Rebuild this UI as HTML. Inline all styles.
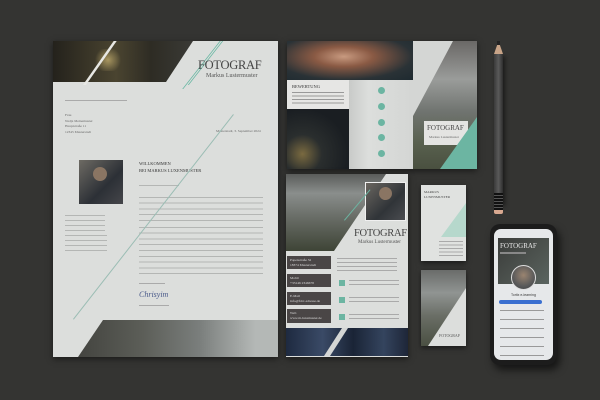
<!DOCTYPE html>
<html><head><meta charset="utf-8"><style>
*{margin:0;padding:0;box-sizing:border-box}
body{width:600px;height:400px;background:#343432;position:relative;overflow:hidden;font-family:"Liberation Serif",serif;color:#333}
.a{position:absolute}
</style></head><body>

<!-- LETTER -->
<div class="a" style="left:53px;top:41px;width:225px;height:316px;background:#dcdedc;box-shadow:0 2px 6px rgba(0,0,0,.5);overflow:hidden">
  <div class="a" style="left:0;top:0;width:140px;height:41px;background:linear-gradient(90deg,#24221c,#4a4430 45%,#2e2c24 70%,#3a3a36);clip-path:polygon(0 0,100% 0,113px 100%,0 100%)"></div>
  <div class="a" style="left:40px;top:8px;width:30px;height:22px;background:radial-gradient(circle,#a89660 0%,rgba(120,100,60,0) 70%)"></div>
  <div class="a" style="left:46px;top:-2px;width:3px;height:46px;background:#e8e8e4;transform:skewX(-35deg)"></div>
  <div class="a" style="left:148px;top:0;width:1px;height:48px;background:#6ab8a4;transform:skewX(-38deg)"></div>
  <div class="a" style="left:152px;top:0;width:1px;height:44px;background:#6ab8a4;transform:skewX(-38deg)"></div>
  <div class="a" style="left:145px;top:17px;font-size:12.5px;color:#444;letter-spacing:-.3px">FOTOGRAF</div>
  <div class="a" style="left:153px;top:32px;font-size:6px;color:#555">Markus Lustermuster</div>
  <div class="a" style="left:12px;top:59px;width:62px;height:1px;background:#aaa"></div>
  <div class="a" style="left:12px;top:72px;font-size:3.5px;line-height:5.5px;color:#666">Frau<br>Nadja Meinemuster<br>Hauptstraße 11<br>12345 Musterstadt</div>
  <div class="a" style="left:163px;top:88px;font-size:3.5px;color:#666">Musterstadt, 3. September 2024</div>
  <div class="a" style="left:26px;top:119px;width:44px;height:44px;background:linear-gradient(135deg,#6d6a63,#2c3036 60%,#45464a)"></div>
  <div class="a" style="left:40px;top:126px;width:14px;height:14px;border-radius:50%;background:#8a7563"></div>
  <div class="a" style="left:86px;top:119px;font-size:4.5px;line-height:7px;color:#333">WILLKOMMEN<br>BEI MARKUS LUXENMUSTER</div>
  <div class="a" style="left:12px;top:174px;width:40px;height:20px;background:repeating-linear-gradient(#b4b6b4 0 1px,transparent 1px 5px)"></div>
  <div class="a" style="left:12px;top:194px;width:42px;height:20px;background:repeating-linear-gradient(#b4b6b4 0 1px,transparent 1px 5px)"></div>
  <div class="a" style="left:86px;top:144px;width:40px;height:1px;background:#b4b6b4"></div>
  <div class="a" style="left:86px;top:156px;width:124px;height:24px;background:repeating-linear-gradient(#b4b6b4 0 1px,transparent 1px 5.7px)"></div>
  <div class="a" style="left:86px;top:186px;width:124px;height:24px;background:repeating-linear-gradient(#b4b6b4 0 1px,transparent 1px 5.7px)"></div>
  <div class="a" style="left:86px;top:215px;width:124px;height:18px;background:repeating-linear-gradient(#b4b6b4 0 1px,transparent 1px 5.7px)"></div>
  <div class="a" style="left:86px;top:242px;width:26px;height:1px;background:#aaa"></div>
  <div class="a" style="left:86px;top:249px;font-size:8px;font-style:italic;color:#4a5a8a">Chrisyim</div>
  <div class="a" style="left:86px;top:264px;width:30px;height:1px;background:#aaa"></div>
  <div class="a" style="left:20px;top:278px;width:260px;height:1px;background:#9bbdb4;transform:rotate(-52deg);transform-origin:0 0"></div>
  <div class="a" style="left:0;top:279px;width:225px;height:37px;background:linear-gradient(90deg,#3a3a36,#5c5e58 40%,#7a7e7c 65%,#b4b8b6 90%);clip-path:polygon(50px 0,100% 0,100% 100%,25px 100%)"></div>
</div>

<!-- TRIFOLD -->
<div class="a" style="left:287px;top:41px;width:190px;height:128px;background:#d8dad8;box-shadow:0 2px 6px rgba(0,0,0,.5);overflow:hidden">
  <div class="a" style="left:0;top:0;width:126px;height:39px;background:radial-gradient(ellipse at 45% 40%,#c89a80 0,#8a5a44 30%,#2a3236 70%,#1e2a30)"></div>
  <div class="a" style="left:0;top:39px;width:62px;height:29px;background:#e6e6e4"></div>
  <div class="a" style="left:5px;top:43px;font-size:4.5px;color:#333">BEWERTUNG</div>
  <div class="a" style="left:5px;top:51px;width:52px;height:14px;background:repeating-linear-gradient(#999 0 1px,transparent 1px 3.5px)"></div>
  <div class="a" style="left:0;top:68px;width:62px;height:60px;background:radial-gradient(circle at 25% 75%,#7a6a40 0,#2a2e2e 30%,#1a1e22 70%)"></div>
  <div class="a" style="left:62px;top:39px;width:64px;height:89px;background:linear-gradient(90deg,#c8cac8,#dcdedc 30%,#d4d6d4)"></div>
  <div class="a" style="left:91px;top:46px;width:7px;height:7px;border-radius:50%;background:#6cb5a2"></div>
  <div class="a" style="left:91px;top:62px;width:7px;height:7px;border-radius:50%;background:#6cb5a2"></div>
  <div class="a" style="left:91px;top:78px;width:7px;height:7px;border-radius:50%;background:#6cb5a2"></div>
  <div class="a" style="left:91px;top:93px;width:7px;height:7px;border-radius:50%;background:#6cb5a2"></div>
  <div class="a" style="left:91px;top:109px;width:7px;height:7px;border-radius:50%;background:#6cb5a2"></div>
  <div class="a" style="left:126px;top:0;width:64px;height:128px;background:linear-gradient(180deg,#6a6866 0,#9a9c9a 30%,#707470 55%,#58604e 80%,#4a5040)"></div>
  <div class="a" style="left:126px;top:0;width:64px;height:128px;background:#d4d6d4;clip-path:polygon(0 0,40px 0,0 75px)"></div>
  <div class="a" style="left:137px;top:80px;width:44px;height:24px;background:#e4e4e2"></div>
  <div class="a" style="left:140px;top:83px;font-size:7px;color:#444">FOTOGRAF</div>
  <div class="a" style="left:142px;top:94px;font-size:3.5px;color:#666">Markus Lustermuster</div>
  <div class="a" style="left:0;top:0;width:190px;height:128px;background:#6cb5a2;clip-path:polygon(190px 76px,190px 128px,153px 128px)"></div>
</div>

<!-- FLYER -->
<div class="a" style="left:286px;top:174px;width:122px;height:183px;background:#dcdedc;box-shadow:0 2px 6px rgba(0,0,0,.5);overflow:hidden">
  <div class="a" style="left:0;top:0;width:122px;height:77px;background:linear-gradient(180deg,#5a5c5a,#8a8e8c 25%,#6a6e68 55%,#3e4436);clip-path:polygon(0 0,100px 0,48px 77px,0 77px)"></div>
  <div class="a" style="left:79px;top:8px;width:41px;height:39px;background:#f0f0f0"></div>
  <div class="a" style="left:80px;top:9px;width:39px;height:37px;background:linear-gradient(135deg,#6a6660,#303438 60%,#4a4c50)"></div>
  <div class="a" style="left:93px;top:13px;width:13px;height:13px;border-radius:50%;background:#8a7563"></div>
  <div class="a" style="left:68px;top:54px;font-size:10.5px;color:#444;letter-spacing:-.3px">FOTOGRAF</div>
  <div class="a" style="left:72px;top:66px;font-size:5px;color:#555">Markus Lustermuster</div>
  <div class="a" style="left:58px;top:46px;width:40px;height:1px;background:#6cb5a2;transform:rotate(-50deg);transform-origin:0 0"></div>
  <div class="a" style="left:1px;top:82px;width:44px;height:13px;background:#4a4646"></div>
  <div class="a" style="left:1px;top:100px;width:44px;height:13px;background:#4a4646"></div>
  <div class="a" style="left:1px;top:118px;width:44px;height:13px;background:#4a4646"></div>
  <div class="a" style="left:1px;top:135px;width:44px;height:14px;background:#4a4646"></div>
  <div class="a" style="left:4px;top:84px;font-size:3.5px;line-height:4.5px;color:#ddd">Papenstraße 32<br>18374 Musterstadt</div>
  <div class="a" style="left:4px;top:102px;font-size:3.5px;line-height:4.5px;color:#ddd">Mobil<br>+33146 2346678</div>
  <div class="a" style="left:4px;top:120px;font-size:3.5px;line-height:4.5px;color:#ddd">E-Mail<br>info@fdcr-adresse.de</div>
  <div class="a" style="left:4px;top:137px;font-size:3.5px;line-height:4.5px;color:#ddd">Web<br>www.m-luxemuster.de</div>
  <div class="a" style="left:51px;top:84px;width:60px;height:13px;background:repeating-linear-gradient(#aaa 0 1px,transparent 1px 4px)"></div>
  <div class="a" style="left:53px;top:106px;width:6px;height:6px;background:#6cb5a2"></div>
  <div class="a" style="left:53px;top:123px;width:6px;height:6px;background:#6cb5a2"></div>
  <div class="a" style="left:53px;top:140px;width:6px;height:6px;background:#6cb5a2"></div>
  <div class="a" style="left:63px;top:106px;width:50px;height:7px;background:repeating-linear-gradient(#aaa 0 1px,transparent 1px 4px)"></div>
  <div class="a" style="left:63px;top:123px;width:50px;height:7px;background:repeating-linear-gradient(#aaa 0 1px,transparent 1px 4px)"></div>
  <div class="a" style="left:63px;top:140px;width:50px;height:7px;background:repeating-linear-gradient(#aaa 0 1px,transparent 1px 4px)"></div>
  <div class="a" style="left:0;top:154px;width:122px;height:28px;background:linear-gradient(90deg,#1e2a40,#3a4a66 30%,#1a2436 55%,#34445e 80%,#1e2638)"></div>
  <div class="a" style="left:0;top:154px;width:122px;height:28px;background:#d4d6d4;clip-path:polygon(38px 28px,44px 28px,62px 0,56px 0)"></div>
</div>

<!-- CARDS -->
<div class="a" style="left:421px;top:185px;width:45px;height:76px;background:#e0e2e0;box-shadow:0 2px 5px rgba(0,0,0,.5);overflow:hidden">
  <div class="a" style="left:3px;top:5px;font-size:3.5px;line-height:4.5px;color:#444">MARKUS<br>LUXENMUSTER</div>
  <div class="a" style="left:0;top:0;width:45px;height:76px;background:#b6d8cc;clip-path:polygon(45px 18px,45px 52px,20px 52px)"></div>
  <div class="a" style="left:18px;top:56px;width:24px;height:16px;background:repeating-linear-gradient(#aaa 0 1px,transparent 1px 3.5px)"></div>
</div>
<div class="a" style="left:421px;top:270px;width:45px;height:76px;background:linear-gradient(180deg,#6a6c6a,#909492 30%,#6a6e66 60%,#4a5042);box-shadow:0 2px 5px rgba(0,0,0,.5);overflow:hidden">
  <div class="a" style="left:0;top:0;width:45px;height:76px;background:#dcdedc;clip-path:polygon(45px 18px,45px 76px,7px 76px)"></div>
  <div class="a" style="left:18px;top:63px;font-size:4px;color:#555">FOTOGRAF</div>
</div>

<!-- PENCIL -->
<div class="a" style="left:494px;top:53px;width:9px;height:150px;background:linear-gradient(90deg,#3a3a3a,#5a5a5a 50%,#2e2e2e);box-shadow:2px 3px 5px rgba(0,0,0,.5)"></div>
<div class="a" style="left:494px;top:41px;width:9px;height:13px;background:#c8a488;clip-path:polygon(50% 0,100% 100%,0 100%)"></div>
<div class="a" style="left:497px;top:41px;width:3px;height:4px;background:#222"></div>
<div class="a" style="left:494px;top:193px;width:9px;height:17px;background:repeating-linear-gradient(#111 0 2px,#555 2px 3px)"></div>
<div class="a" style="left:494px;top:210px;width:9px;height:4px;background:#d8a890;border-radius:0 0 2px 2px"></div>

<!-- PHONE -->
<div class="a" style="left:490px;top:224px;width:67px;height:141px;background:#1c1c1c;border-radius:10px;box-shadow:3px 5px 8px rgba(0,0,0,.6)"></div>
<div class="a" style="left:494px;top:229px;width:59px;height:131px;background:#e6e8ea;border-radius:7px;overflow:hidden">
  <div class="a" style="left:4px;top:9px;width:51px;height:46px;background:linear-gradient(135deg,#3a3c3a,#4e5450 60%,#5a6460)"></div>
  <div class="a" style="left:6px;top:13px;font-size:7px;color:#e8e8e8">FOTOGRAF</div>
  <div class="a" style="left:6px;top:23px;width:26px;height:2px;background:#888"></div>
  <div class="a" style="left:17px;top:36px;width:25px;height:25px;border-radius:50%;background:radial-gradient(circle at 50% 40%,#9a8470,#5a5a5a 60%,#3a3c40);border:1px solid #ddd"></div>
  <div class="a" style="left:17px;top:64px;font-family:'Liberation Sans',sans-serif;font-size:3.5px;color:#333">Tortix e-learning</div>
  <div class="a" style="left:5px;top:71px;width:43px;height:4px;border-radius:2px;background:#3a6fd0"></div>
  <div class="a" style="left:6px;top:81px;width:44px;height:46px;background:repeating-linear-gradient(#999 0 1px,transparent 1px 9px)"></div>
</div>
</body></html>
